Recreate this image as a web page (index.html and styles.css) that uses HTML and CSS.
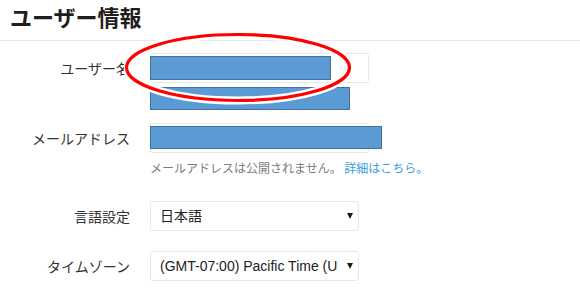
FILE: index.html
```html
<!DOCTYPE html>
<html lang="ja">
<head>
<meta charset="utf-8">
<link rel="stylesheet" href="styles.css">
</head>
<body>
<h1 class="title">ユーザー情報</h1>
<div class="form">
  <div class="row row-user">
    <div class="label">ユーザー名</div>
    <div class="field">
      <div class="input wide">
        <div class="redact redact-user"></div>
      </div>
      <div class="redact-block"></div>
    </div>
    <svg class="circle" width="232" height="74" viewBox="0 0 232 74">
      <ellipse cx="114" cy="35.5" rx="111.5" ry="33" fill="none" stroke="#ffffff" stroke-width="8"/>
      <ellipse cx="114" cy="35.5" rx="111.5" ry="33" fill="none" stroke="#ff0000" stroke-width="3.2"/>
    </svg>
  </div>
  <div class="row row-mail">
    <div class="label">メールアドレス</div>
    <div class="field">
      <div class="input wide">
        <div class="redact redact-mail"></div>
      </div>
      <p class="help">メールアドレスは公開されません。 <a class="link">詳細はこちら。</a></p>
    </div>
  </div>
  <div class="row row-lang">
    <div class="label">言語設定</div>
    <div class="field">
      <div class="select"><span class="value">日本語</span><span class="arrow"></span></div>
    </div>
  </div>
  <div class="row row-tz">
    <div class="label">タイムゾーン</div>
    <div class="field">
      <div class="select"><span class="value">(GMT-07:00) Pacific Time (US &amp; Canada)</span><span class="arrow"></span></div>
    </div>
  </div>
</div>
</body>
</html>
```
FILE: styles.css
```css
html, body {
  margin: 0;
  padding: 0;
  background: #ffffff;
}
body {
  width: 580px;
  height: 297px;
  overflow: hidden;
  font-family: "Liberation Sans", "Noto Sans CJK JP", sans-serif;
  color: #333333;
  font-size: 14px;
}
.title {
  margin: 0;
  padding: 0 0 8px 10px;
  font-size: 22px;
  line-height: 32px;
  font-weight: bold;
  color: #1e1e1e;
  border-bottom: 1px solid #e6e9ed;
  font-family: "Noto Sans CJK JP", sans-serif;
}
.form {
  display: flex;
  flex-direction: column;
  padding-top: 12px;
}
.row {
  display: grid;
  grid-template-columns: 130px 219px;
  column-gap: 20px;
  align-items: start;
  position: relative;
}
.label {
  text-align: right;
  line-height: 30px;
  height: 30px;
  color: #333333;
  font-family: "Noto Sans CJK JP", sans-serif;
}
.field {
  display: flex;
  flex-direction: column;
}
.input {
  position: relative;
  height: 28px;
  border: 1px solid #e4e7eb;
  border-radius: 3px;
}
.redact {
  position: absolute;
  left: -1px;
  top: 2px;
  height: 22px;
  background: #5b9bd5;
  border: 1px solid #41719c;
}
.redact-user {
  width: 179px;
  height: 22px;
}
.redact-mail {
  width: 230px;
  height: 21px;
}
.redact-block {
  margin-top: 4px;
  width: 198px;
  height: 21px;
  background: #5b9bd5;
  border: 1px solid #41719c;
}
.circle {
  position: absolute;
  left: 124px;
  top: -21px;
}
.row-mail {
  margin-top: 13px;
}
.help {
  margin: 6px 0 0 0;
  font-size: 12px;
  line-height: 17px;
  color: #7b7b7b;
  white-space: nowrap;
  font-family: "Noto Sans CJK JP", sans-serif;
}
.link {
  color: #3a9de0;
}
.row-lang {
  margin-top: 25px;
  grid-template-columns: 130px 209px;
}
.row-tz {
  margin-top: 20px;
  grid-template-columns: 130px 209px;
}
.select {
  display: flex;
  align-items: center;
  height: 28px;
  border: 1px solid #e4e7eb;
  border-radius: 3px;
  padding: 0 5px 0 9px;
}
.value {
  flex: 1;
  overflow: hidden;
  white-space: nowrap;
  color: #222222;
  line-height: 28px;
  margin-right: 9px;
}
.arrow {
  width: 0;
  height: 0;
  border-left: 3px solid transparent;
  border-right: 3px solid transparent;
  border-top: 6px solid #1a1a1a;
}
```
